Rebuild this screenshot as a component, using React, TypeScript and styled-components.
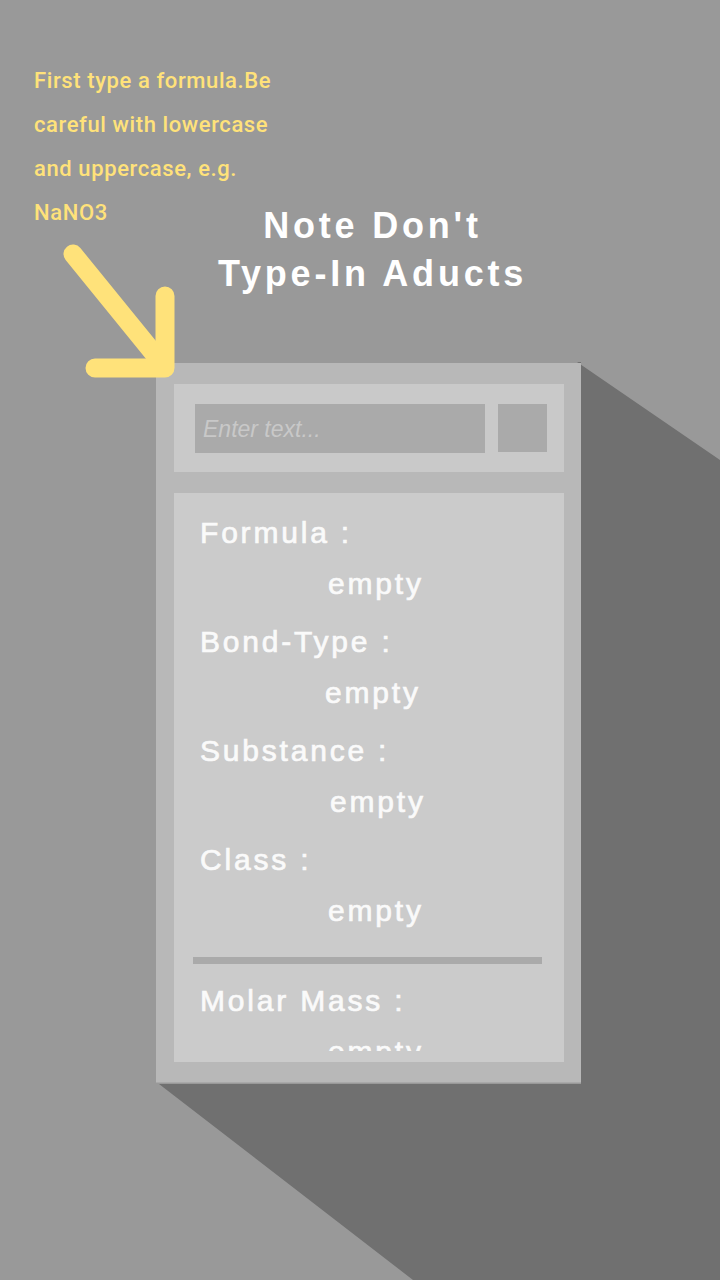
import React from 'react';
import styled, { createGlobalStyle } from 'styled-components';

const GlobalStyle = createGlobalStyle`
  html, body {
    margin: 0;
    padding: 0;
    background: #999999;
    overflow: hidden;
  }
  * {
    box-sizing: border-box;
  }
`;

const Screen = styled.div`
  position: relative;
  width: 720px;
  height: 1280px;
  background: #999999;
  overflow: hidden;
  font-family: 'Liberation Sans', Arial, sans-serif;
`;

const LongShadow = styled.svg`
  position: absolute;
  inset: 0;
  width: 720px;
  height: 1280px;
  pointer-events: none;
`;

const Column = styled.main`
  position: relative;
  display: flex;
  flex-direction: column;
  padding: 202px 0 0 156px;
`;

const Title = styled.h1`
  width: 425px;
  margin: 0;
  padding-left: 8px;
  text-align: center;
  color: #ffffff;
  font-family: 'Liberation Sans', Arial, sans-serif;
  font-size: 36px;
  font-weight: 700;
  line-height: 48px;
  letter-spacing: 3.8px;
`;

const Panel = styled.section`
  display: flex;
  flex-direction: column;
  gap: 21px;
  width: 425px;
  height: 720px;
  margin-top: 65px;
  padding: 21px 17px 20px 18px;
  background: #b8b8b8;
  border-bottom: 1px solid #a9a9a9;
`;

const SearchBar = styled.div`
  display: flex;
  align-items: center;
  gap: 13px;
  height: 88px;
  padding: 0 17px 0 21px;
  background: #c9c9c9;
`;

const TextField = styled.input`
  width: 290px;
  height: 49px;
  padding: 3px 8px 0;
  border: none;
  outline: none;
  background: #aaaaaa;
  color: #ffffff;
  font-family: 'Liberation Sans', Arial, sans-serif;
  font-size: 23px;
  font-style: italic;

  &::placeholder {
    color: #c8c8c8;
    opacity: 1;
  }
`;

const SquareButton = styled.button`
  width: 49px;
  height: 48px;
  padding: 0;
  border: none;
  background: #aaaaaa;
`;

const InfoCard = styled.div`
  flex: 1;
  display: flex;
  flex-direction: column;
  min-height: 0;
  padding-bottom: 11px;
  background: #cbcbcb;
`;

const InfoViewport = styled.div`
  flex: 1;
  overflow: hidden;
  padding-top: 23px;
`;

const Field = styled.div`
  display: flex;
  flex-direction: column;
  padding-left: 26px;
  margin-bottom: 24px;
`;

const Label = styled.div`
  color: #fafafa;
  font-size: 30px;
  line-height: 34px;
  letter-spacing: 2.8px;
  -webkit-text-stroke: 0.7px #fafafa;
  white-space: nowrap;
`;

const Value = styled(Label)<{ $shift: number }>`
  margin-top: 17px;
  padding-left: ${(p) => p.$shift}px;
`;

const Divider = styled.hr`
  height: 7px;
  margin: 29px 22px 20px 19px;
  border: none;
  background: #aaaaaa;
`;

const Hint = styled.p`
  position: absolute;
  top: 59px;
  left: 34px;
  width: 260px;
  margin: 0;
  color: #ffe27a;
  font-family: Roboto, 'Noto Sans', sans-serif;
  font-size: 22px;
  font-weight: 500;
  line-height: 44px;
  letter-spacing: 0.6px;
`;

const Pointer = styled.svg`
  position: absolute;
  left: 0;
  top: 0;
  width: 200px;
  height: 400px;
  pointer-events: none;
`;

const fields = [
  { label: 'Formula :', shift: 128 },
  { label: 'Bond-Type :', shift: 125 },
  { label: 'Substance :', shift: 130 },
  { label: 'Class :', shift: 128 },
];

export default function App() {
  return (
    <Screen>
      <GlobalStyle />
      <LongShadow viewBox="0 0 720 1280">
        <polygon
          points="577,362 720,460 720,1280 413,1280 159,1084 581,1084 581,362"
          fill="#707070"
        />
      </LongShadow>

      <Column>
        <Title>
          Note Don't
          <br />
          Type-In Aducts
        </Title>

        <Panel>
          <SearchBar>
            <TextField placeholder="Enter text..." />
            <SquareButton aria-label="search" />
          </SearchBar>

          <InfoCard>
            <InfoViewport>
              {fields.map((f) => (
                <Field key={f.label}>
                  <Label>{f.label}</Label>
                  <Value $shift={f.shift}>empty</Value>
                </Field>
              ))}
              <Divider />
              <Field>
                <Label>Molar Mass :</Label>
                <Value $shift={128}>empty</Value>
              </Field>
            </InfoViewport>
          </InfoCard>
        </Panel>
      </Column>

      <Hint>First type a formula.Be careful with lowercase and uppercase, e.g. NaNO3</Hint>
      <Pointer viewBox="0 0 200 400">
        <g
          fill="none"
          stroke="#ffe27a"
          strokeWidth="19"
          strokeLinecap="round"
          strokeLinejoin="round"
        >
          <path d="M73 254 L160 361" />
          <path d="M95 368 L165 368 L165 296" />
        </g>
      </Pointer>
    </Screen>
  );
}
